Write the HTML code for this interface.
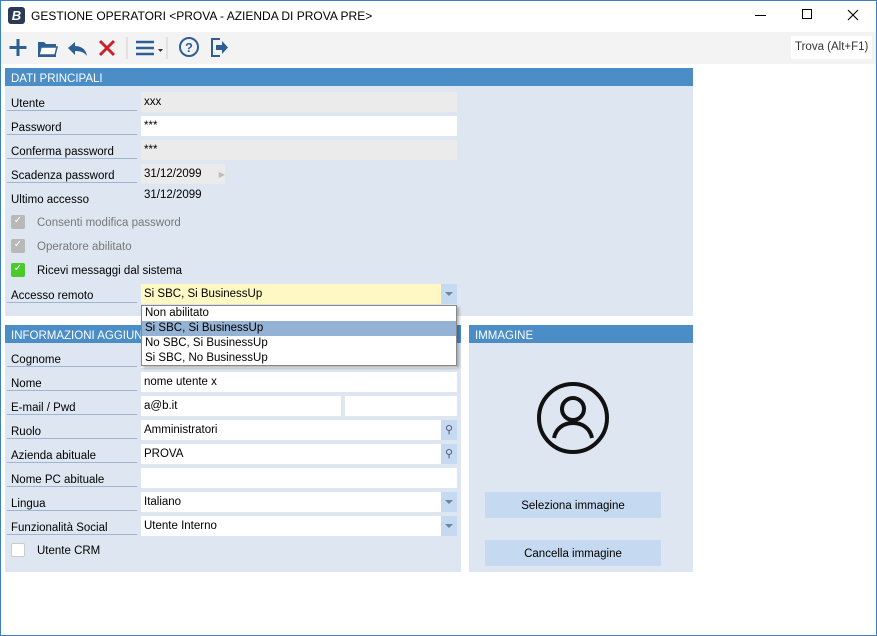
<!DOCTYPE html><html><head><meta charset="utf-8"><style>
*{margin:0;padding:0;box-sizing:border-box}
body{width:877px;height:636px;background:#fff;font-family:"Liberation Sans",sans-serif;font-size:11.5px;color:#000;position:relative;overflow:hidden}
.a{position:absolute}
.win{left:0;top:0;width:877px;height:636px;border:1px solid #3c7fc4}
.tb{left:1px;top:32px;width:875px;height:32px;background:#f3f3f3}
.panel{background:#dee7f1}
.hdr{background:#4a8dc7;color:#fff;font-size:11.5px;padding:5px 0 0 6px;height:18px}
.lbl{left:7px;width:130px;height:20px;border-bottom:1px solid #9fb5cf;padding:7px 0 0 4px}
.inp{left:141px;height:20px;background:#fff;padding:4px 0 0 3px}
.g{background:#ebebeb}
.btn{background:#c5d9f0;text-align:center;padding-top:7px;height:26px;left:485px;width:176px}
.cb{width:14px;height:14px;border-radius:2px}
.dd{width:16px;height:20px;background:#c5d9f0}
.dd:after{content:"";position:absolute;left:4px;top:8px;border-left:4px solid transparent;border-right:4px solid transparent;border-top:4px solid #6a84a3}
</style></head><body>
<div class="a win"></div>
<div class="a" style="left:8px;top:7px;width:17px;height:17px;background:#2b3a55;border-radius:3px;color:#fff;font-weight:bold;font-style:italic;font-size:13px;text-align:center;line-height:17px">B</div>
<div class="a" style="left:31px;top:9px;font-size:12px">GESTIONE OPERATORI &lt;PROVA - AZIENDA DI PROVA PRE&gt;</div>
<div class="a" style="left:755px;top:15px;width:11px;border-top:1px solid #000"></div>
<div class="a" style="left:802px;top:9px;width:10px;height:10px;border:1px solid #000"></div>
<svg class="a" style="left:847px;top:9px" width="12" height="12"><path d="M1 1l10 10M11 1L1 11" stroke="#000" stroke-width="1.1"/></svg>
<div class="a tb"></div>
<svg class="a" style="left:0;top:32px" width="240" height="32" viewBox="0 0 240 32">
<g stroke="#2e5f94" fill="none" stroke-width="3">
<path d="M18 7v17M9.5 15.5h17"/>
</g>
<path d="M38 10h6l2 2h10v13H38z" fill="#2e5f94"/><path d="M41 15h16l-2 8H39z" fill="#fff" stroke="#2e5f94" stroke-width="1.5"/>
<path d="M68 16l7-6v4c6 0 11 3 12 10-3-4-7-5-12-5v4z" fill="#2e5f94"/>
<path d="M100 9l14 14M114 9L100 23" stroke="#c8232c" stroke-width="3"/>
<path d="M127 5v22M167 5v22" stroke="#d0d0d0"/>
<path d="M136 10h18M136 16h18M136 22h18" stroke="#2e5f94" stroke-width="2.5"/>
<path d="M158 17h5l-2.5 3z" fill="#333"/>
<circle cx="189" cy="15" r="9" fill="none" stroke="#2e5f94" stroke-width="2"/>
<text x="185" y="20" font-size="13" font-weight="bold" fill="#2e5f94" font-family="Liberation Sans">?</text>
<path d="M220 7h-8v17h8" fill="none" stroke="#2e5f94" stroke-width="2"/><path d="M216 13h6v-4l6 6.5-6 6.5v-4h-6z" fill="#2e5f94"/>
</svg>
<div class="a" style="left:791px;top:36px;width:81px;height:23px;background:#fff;padding:5px 0 0 4px;color:#333">Trova (Alt+F1)</div>

<div class="a panel" style="left:5px;top:68px;width:688px;height:248px"></div>
<div class="a hdr" style="left:5px;top:68px;width:688px">DATI PRINCIPALI</div>
<div class="a lbl" style="top:91px">Utente</div><div class="a inp g" style="top:92px;width:316px">xxx</div>
<div class="a lbl" style="top:115px">Password</div><div class="a inp" style="top:116px;width:316px">***</div>
<div class="a lbl" style="top:139px">Conferma password</div><div class="a inp g" style="top:140px;width:316px">***</div>
<div class="a lbl" style="top:163px">Scadenza password</div><div class="a inp g" style="top:164px;width:84px">31/12/2099 <span style="color:#bbb;font-size:8px;margin-left:14px">▶</span></div>
<div class="a lbl" style="top:187px;border:0">Ultimo accesso</div><div class="a" style="left:144px;top:189px">31/12/2099</div>
<div class="a cb" style="left:11px;top:215px;background:#b8b8b8;color:#fff;font-size:10px;text-align:center">✓</div><div class="a" style="left:37px;top:217px;color:#777">Consenti modifica password</div>
<div class="a cb" style="left:11px;top:239px;background:#b8b8b8;color:#fff;font-size:10px;text-align:center">✓</div><div class="a" style="left:37px;top:241px;color:#777">Operatore abilitato</div>
<div class="a cb" style="left:11px;top:263px;background:#4cc92b;color:#fff;font-size:10px;text-align:center">✓</div><div class="a" style="left:37px;top:265px">Ricevi messaggi dal sistema</div>
<div class="a lbl" style="top:283px">Accesso remoto</div><div class="a inp" style="top:284px;width:316px;background:#fdf8c4">Si SBC, Si BusinessUp</div><div class="a dd" style="left:441px;top:284px"></div>

<div class="a panel" style="left:5px;top:325px;width:456px;height:247px"></div>
<div class="a hdr" style="left:5px;top:325px;width:456px">INFORMAZIONI AGGIUNTIVE</div>
<div class="a lbl" style="top:347px">Cognome</div><div class="a inp" style="top:348px;width:316px"></div>
<div class="a lbl" style="top:371px">Nome</div><div class="a inp" style="top:372px;width:316px">nome utente x</div>
<div class="a lbl" style="top:395px">E-mail / Pwd</div><div class="a inp" style="top:396px;width:200px">a@b.it</div><div class="a inp" style="left:345px;top:396px;width:112px"></div>
<div class="a lbl" style="top:419px">Ruolo</div><div class="a inp" style="top:420px;width:300px">Amministratori</div><div class="a" style="left:441px;top:420px;width:16px;height:20px;background:#c5d9f0;color:#557;font-size:11px;text-align:center;padding-top:3px">⚲</div>
<div class="a lbl" style="top:443px">Azienda abituale</div><div class="a inp" style="top:444px;width:300px">PROVA</div><div class="a" style="left:441px;top:444px;width:16px;height:20px;background:#c5d9f0;color:#557;font-size:11px;text-align:center;padding-top:3px">⚲</div>
<div class="a lbl" style="top:467px">Nome PC abituale</div><div class="a inp" style="top:468px;width:316px"></div>
<div class="a lbl" style="top:491px">Lingua</div><div class="a inp" style="top:492px;width:300px">Italiano</div><div class="a dd" style="left:441px;top:492px"></div>
<div class="a lbl" style="top:515px">Funzionalità Social</div><div class="a inp" style="top:516px;width:300px">Utente Interno</div><div class="a dd" style="left:441px;top:516px"></div>
<div class="a cb" style="left:11px;top:543px;background:#fff;border:1px solid #ccc"></div><div class="a" style="left:37px;top:545px">Utente CRM</div>

<div class="a panel" style="left:469px;top:325px;width:224px;height:247px"></div>
<div class="a hdr" style="left:469px;top:325px;width:224px">IMMAGINE</div>
<svg class="a" style="left:535px;top:380px" width="76" height="76"><circle cx="38" cy="38" r="34" fill="none" stroke="#111" stroke-width="4"/><circle cx="38" cy="29" r="11" fill="none" stroke="#111" stroke-width="4"/><path d="M19 58c2-10 10-15 19-15s17 5 19 15" fill="none" stroke="#111" stroke-width="4"/></svg>
<div class="a btn" style="top:492px;padding-top:8px">Seleziona immagine</div>
<div class="a btn" style="top:540px;padding-top:8px">Cancella immagine</div>

<div class="a" style="left:141px;top:305px;width:316px;height:61px;background:#fff;border:1px solid #888;box-shadow:2px 2px 3px rgba(0,0,0,.3);font-size:11.5px">
<div style="height:15px;padding:1px 3px">Non abilitato</div>
<div style="height:15px;padding:1px 3px;background:#94b2d3">Si SBC, Si BusinessUp</div>
<div style="height:15px;padding:1px 3px">No SBC, Si BusinessUp</div>
<div style="height:15px;padding:1px 3px">Si SBC, No BusinessUp</div>
</div>
</body></html>
